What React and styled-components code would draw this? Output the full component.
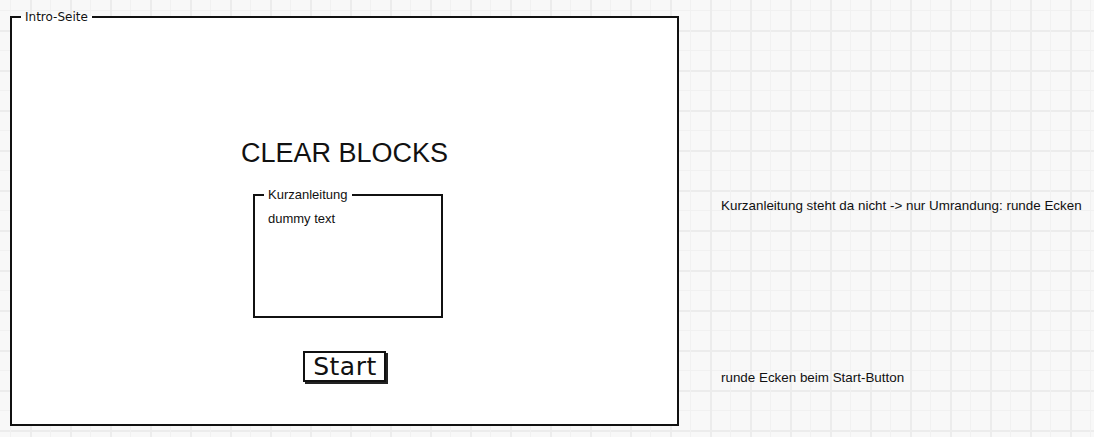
import styled, { createGlobalStyle } from "styled-components";

const Global = createGlobalStyle`
  html, body {
    margin: 0;
    padding: 0;
  }
  body {
    min-height: 100vh;
    background-color: #f8f8f8;
    background-image:
      linear-gradient(to right, transparent 10px, #f1f1f1 10px, #f1f1f1 11px, transparent 11px, transparent 30px, #ececec 30px, #ececec 32px, transparent 32px),
      linear-gradient(to bottom, transparent 10px, #f1f1f1 10px, #f1f1f1 11px, transparent 11px, transparent 30px, #ececec 30px, #ececec 32px, transparent 32px);
    background-size: 40px 40px;
    font-family: "Liberation Sans", Arial, sans-serif;
    color: #111;
  }
`;

const Canvas = styled.div`
  display: flex;
  align-items: flex-start;
`;

// wireframe container with a caption cut into the top border
const Frame = styled.fieldset`
  box-sizing: border-box;
  margin: 10px 0 0 10px;
  padding: 0;
  width: 669px;
  height: 416px;
  border: 2px solid #111;
  background: #fff;
  display: flex;
  flex-direction: column;
  align-items: center;
`;

const Caption = styled.legend`
  margin-left: ${(p) => p.$inset}px;
  padding: 0 4px;
  font-family: ${(p) => (p.$mono ? '"DejaVu Sans"' : '"Liberation Sans"')}, sans-serif;
  font-size: ${(p) => p.$size}px;
  color: #111;
`;

const Title = styled.h1`
  margin: 114px 0 0;
  font-family: "Liberation Sans", Arial, sans-serif;
  font-size: 27px;
  font-weight: 400;
  line-height: 31px;
  color: #111;
`;

const Instructions = styled.fieldset`
  box-sizing: border-box;
  margin: 18px 0 0 7px;
  padding: 0;
  width: 190px;
  height: 131px;
  border: 2px solid #111;
  font-size: 13px;
`;

const InstructionsBody = styled.div`
  padding: 9px 13px;
`;

const StartButton = styled.button`
  margin: 33px 0 0;
  padding: 0 7px 0 8px;
  height: 31px;
  border: 2px solid #111;
  background: #fff;
  box-shadow: 2px 2px 0 #222;
  font-family: "DejaVu Sans", sans-serif;
  font-size: 25px;
  line-height: 26px;
  letter-spacing: 0.5px;
  color: #111;
`;

const Notes = styled.div`
  display: flex;
  flex-direction: column;
  padding: 198px 0 0 42px;
  font-size: 13.4px;
  line-height: 15px;
`;

const Note = styled.div`
  margin-top: ${(p) => p.$gap || 0}px;
  white-space: nowrap;
`;

export default function App() {
  return (
    <>
      <Global />
      <Canvas>
        <Frame>
          <Caption $inset={9} $size={12} $mono>
            Intro-Seite
          </Caption>
          <Title>CLEAR BLOCKS</Title>
          <Instructions>
            <Caption $inset={9} $size={13}>
              Kurzanleitung
            </Caption>
            <InstructionsBody>dummy text</InstructionsBody>
          </Instructions>
          <StartButton>Start</StartButton>
        </Frame>
        <Notes>
          <Note>Kurzanleitung steht da nicht -&gt; nur Umrandung: runde Ecken</Note>
          <Note $gap={157}>runde Ecken beim Start-Button</Note>
        </Notes>
      </Canvas>
    </>
  );
}
